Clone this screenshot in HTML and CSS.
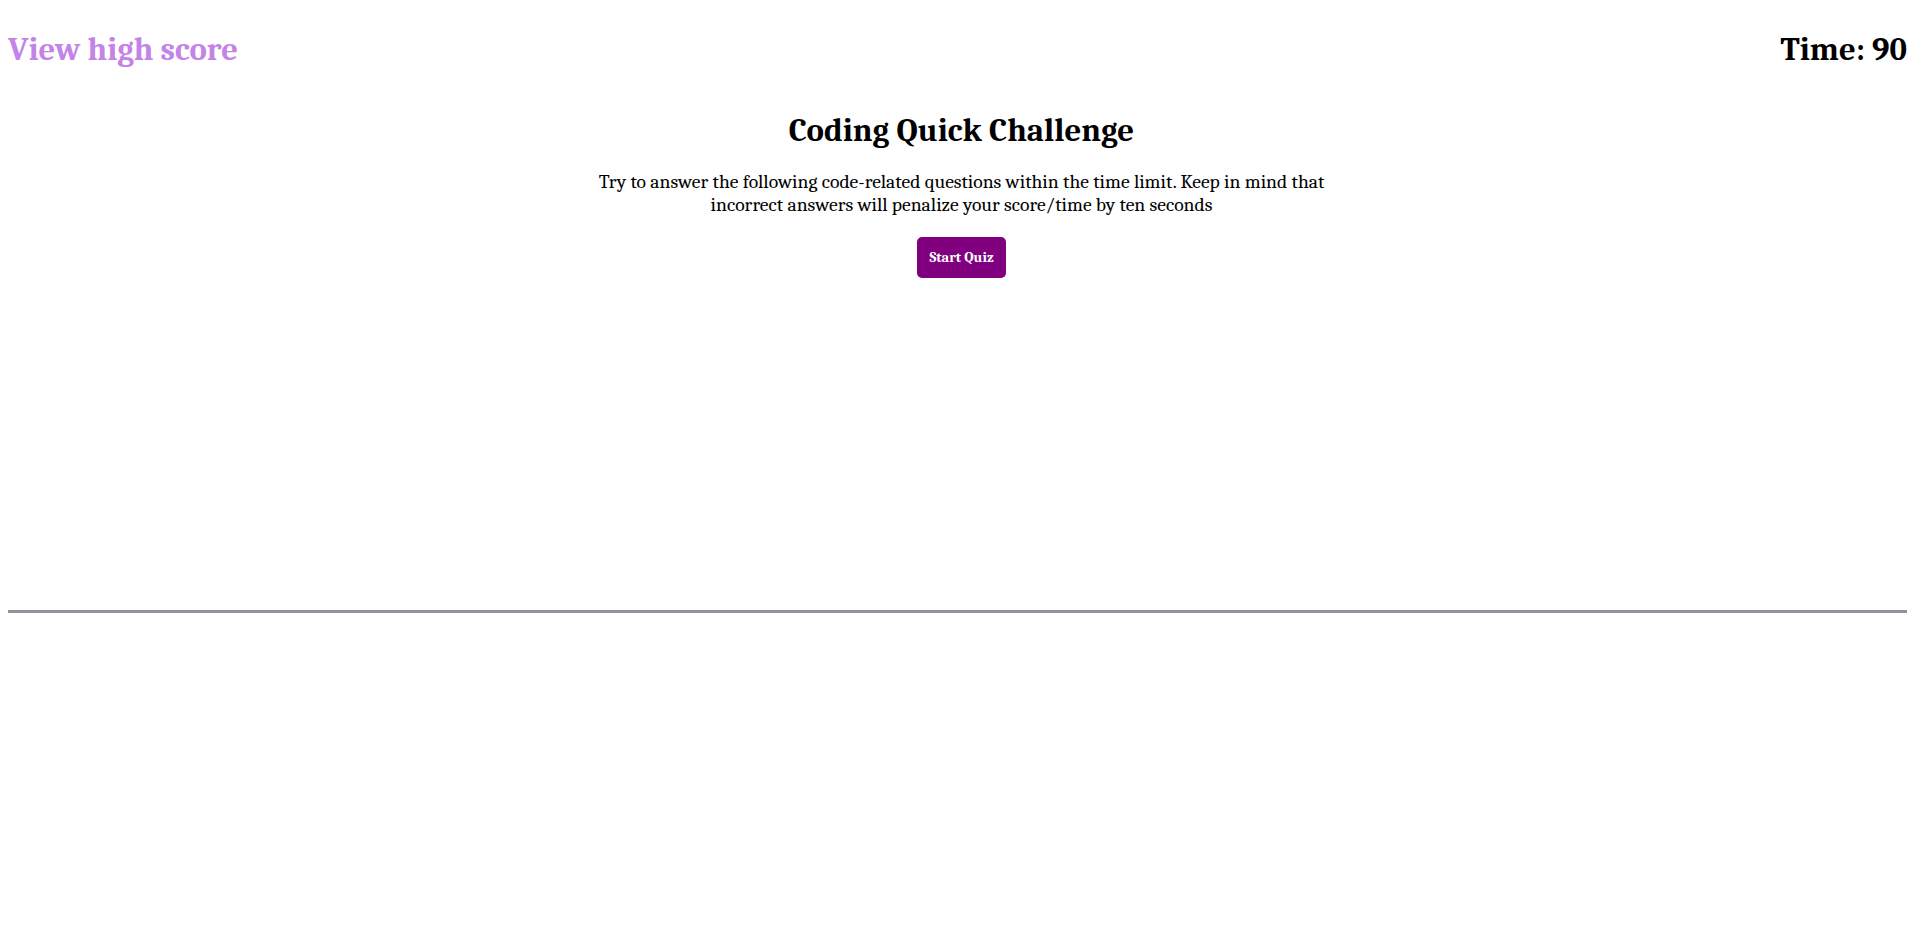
FILE: index.html
```html
<!DOCTYPE html>
<html lang="en">
<head>
<meta charset="utf-8">
<title>Coding Quick Challenge</title>
<link rel="stylesheet" href="styles.css">
</head>
<body>
<header class="top-bar">
  <a class="high-score-link" href="#">View high score</a>
  <div class="timer">Time: <span class="timer-value">90</span></div>
</header>
<div class="content">
  <main class="intro">
    <h1 class="intro-title">Coding Quick Challenge</h1>
    <p class="intro-text">Try to answer the following code-related questions within the time limit. Keep in mind that<br>incorrect answers will penalize your score/time by ten seconds</p>
    <button class="start-button" type="button">Start Quiz</button>
  </main>
  <section class="result-area"></section>
  <div class="divider"></div>
</div>
</body>
</html>
```

FILE: styles.css
```css
html {
  overflow: hidden;
}

body {
  margin: 8px;
  font-family: Cambria, Caladea, "Liberation Serif", serif;
  color: #000;
  background: #fff;
}

.top-bar {
  display: flex;
  justify-content: space-between;
  align-items: baseline;
  padding-top: 24px;
  padding-bottom: 1px;
  font-size: 32.7px;
  font-weight: bold;
  line-height: 36px;
}

.high-score-link {
  color: #c383e7;
  text-decoration: none;
}

.timer {
  color: #000;
}

.content {
  width: calc(100% + 8px);
}

.intro {
  display: flex;
  flex-direction: column;
  align-items: center;
  text-align: center;
}

.intro-title {
  margin: 42px 0 0;
  font-size: 32.8px;
  line-height: 38px;
}

.intro-text {
  margin: 21px 0 0;
  font-size: 19.6px;
  line-height: 23px;
}

.start-button {
  margin-top: 21px;
  padding: 0;
  width: 89px;
  height: 41px;
  border: none;
  border-radius: 5px;
  background: #800080;
  color: #fff;
  font-family: inherit;
  font-size: 14.5px;
  font-weight: bold;
}

.result-area {
  height: 332px;
}

.divider {
  height: 3px;
  background: #958f9d;
}
```
